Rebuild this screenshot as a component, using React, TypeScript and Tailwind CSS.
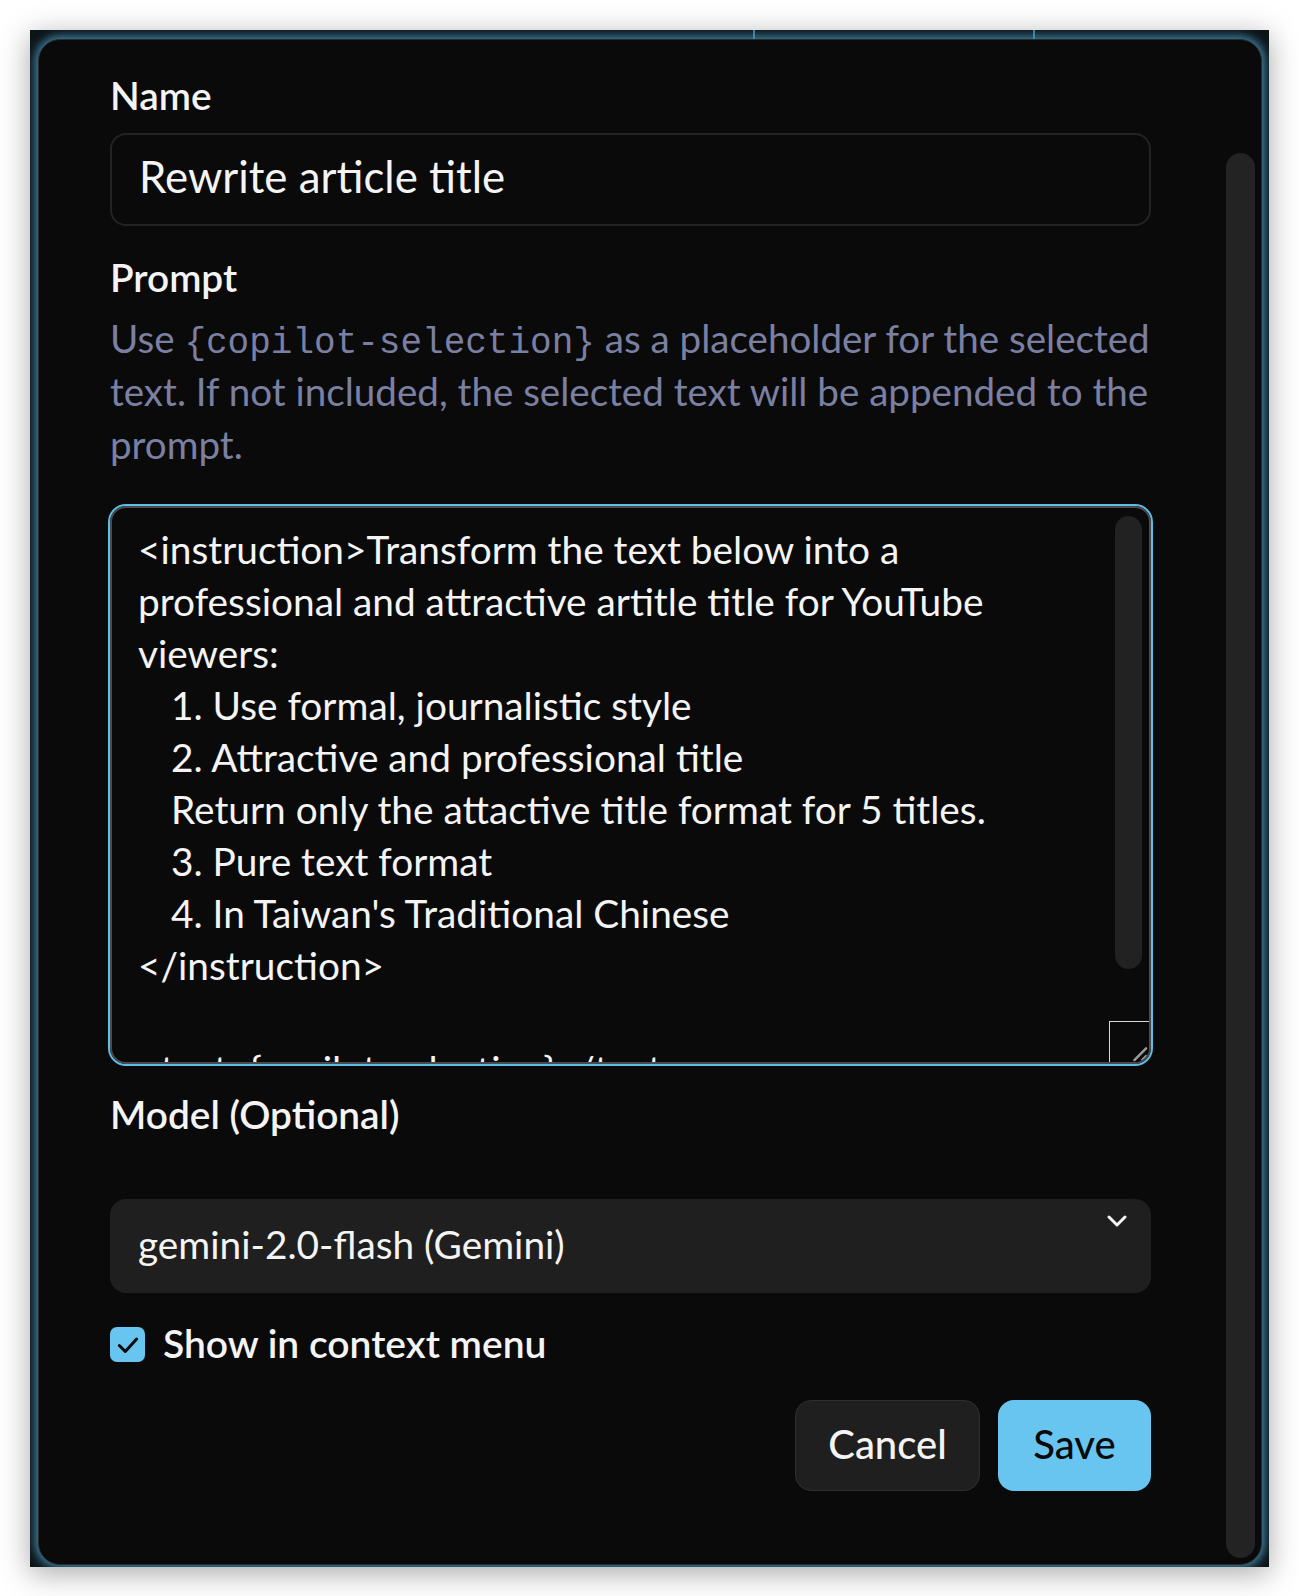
import React from 'react';

const promptLines: { text: string; indent?: boolean }[] = [
    { text: '<instruction>Transform the text below into a' },
    { text: 'professional and attractive artitle title for YouTube' },
    { text: 'viewers:' },
    { text: '1. Use formal, journalistic style', indent: true },
    { text: '2. Attractive and professional title', indent: true },
    { text: 'Return only the attactive title format for 5 titles.', indent: true },
    { text: '3. Pure text format', indent: true },
    { text: "4. In Taiwan's Traditional Chinese", indent: true },
    { text: '</instruction>' },
    { text: '\u00a0' },
    { text: '<text>{copilot-selection}</text>' },
];

const sans = "font-['Lato','Liberation_Sans',sans-serif]";

const App: React.FC = () => {
    return (
        <div className={`w-[1299px] h-[1596px] bg-white pt-[30px] pl-[30px] ${sans}`}>
            <div className="relative w-[1239px] h-[1537px] bg-[#0d1418] overflow-hidden shadow-[0_6px_28px_rgba(0,0,0,0.35)] pl-[8px] pt-[9px]">
                {/* page behind the dialog, barely visible at the top */}
                <div className="absolute top-0 left-[723px] w-[2px] h-[9px] bg-[#3f7f9c]" />
                <div className="absolute top-0 left-[1003px] w-[2px] h-[9px] bg-[#3f7f9c]" />

                <div className="relative w-[1224px] h-[1526px] bg-[#0a0a0a] rounded-[22px] border border-[#2b2b2b] shadow-[0_0_10px_3px_rgba(70,150,188,0.85)] pl-[71px] pt-[30px]">
                    {/* dialog scrollbar */}
                    <div className="absolute left-[1187px] top-[113px] w-[29px] h-[1405px] rounded-full bg-[#232323]" />

                    <div className="w-[1041px] flex flex-col text-[#f4f4f4]">
                        <label className="h-[50px] leading-[50px] text-[38.8px] font-semibold">Name</label>
                        <div className="mt-[13px] h-[93px] rounded-[16px] border-2 border-[#232323] pl-[27px] pb-[5px] flex items-center text-[43.8px]">
                            Rewrite article title
                        </div>

                        <label className="mt-[26px] h-[50px] leading-[50px] text-[38.8px] font-semibold">Prompt</label>
                        <p className="mt-[10px] h-[159px] text-[38.6px] leading-[53px] text-[#7b80a3] whitespace-nowrap">
                            Use <span className="font-['Liberation_Mono','Courier_New',monospace] text-[36px] leading-none">{'{copilot-selection}'}</span> as a placeholder for the selected
                            <br />
                            text. If not included, the selected text will be appended to the
                            <br />
                            prompt.
                        </p>

                        <div className="relative mt-[35px] h-[558px] rounded-[16px] border-2 border-[#4a4a4a] shadow-[0_0_0_2px_#5bbde9] overflow-hidden">
                            <div className="pt-[15px] pl-[26px] text-[38.8px] leading-[52px] whitespace-pre">
                                {promptLines.map((line, i) => (
                                    <div key={i} className={line.indent ? 'pl-[33px]' : ''}>{line.text}</div>
                                ))}
                            </div>
                            <div className="absolute right-[7px] top-[8px] w-[27px] h-[453px] rounded-full bg-[#222222]" />
                            <div className="absolute right-0 bottom-0 w-[40px] h-[41px] bg-[#0a0a0a] border-t border-l border-[#d8d8d8]">
                                <svg viewBox="0 0 40 41" className="w-full h-full">
                                    <line x1="25" y1="39" x2="37" y2="27" stroke="#9b9b9b" strokeWidth="2.5" strokeLinecap="round" />
                                    <line x1="33" y1="39" x2="37" y2="35" stroke="#9b9b9b" strokeWidth="2.5" strokeLinecap="round" />
                                </svg>
                            </div>
                        </div>

                        <label className="mt-[25px] h-[50px] leading-[50px] text-[38.8px] font-semibold">Model (Optional)</label>
                        <div className="relative mt-[60px] h-[94px] rounded-[16px] bg-[#1f1f1f] pl-[28px] pb-[4px] flex items-center text-[38.8px]">
                            gemini-2.0-flash (Gemini)
                            <svg viewBox="0 0 20 12" className="absolute right-[24px] top-[16px] w-[20px] h-[12px]" fill="none">
                                <polyline points="2,2 10,10 18,2" stroke="#f4f4f4" strokeWidth="3" strokeLinecap="round" strokeLinejoin="round" />
                            </svg>
                        </div>

                        <div className="mt-[34px] h-[35px] flex items-center gap-[18px]">
                            <div className="w-[35px] h-[35px] rounded-[7px] bg-[#68c5f0] flex items-center justify-center">
                                <svg viewBox="0 0 24 24" className="w-[26px] h-[26px]" fill="none">
                                    <polyline points="4,12.5 9.5,18 20,6.5" stroke="#0a0a0a" strokeWidth="2.8" strokeLinecap="round" strokeLinejoin="round" />
                                </svg>
                            </div>
                            <span className="text-[39px] font-semibold pb-[3px]">Show in context menu</span>
                        </div>

                        <div className="mt-[38px] flex justify-end gap-[18px]">
                            <button className="w-[185px] h-[91px] rounded-[16px] bg-[#1f1f1f] border border-[#2e2e2e] text-[40px] font-medium text-[#f4f4f4] pb-[4px]">Cancel</button>
                            <button className="w-[153px] h-[91px] rounded-[16px] bg-[#68c5f0] text-[40px] font-medium text-[#0a0a0a] pb-[4px]">Save</button>
                        </div>
                    </div>
                </div>
            </div>
        </div>
    );
};

export default App;
